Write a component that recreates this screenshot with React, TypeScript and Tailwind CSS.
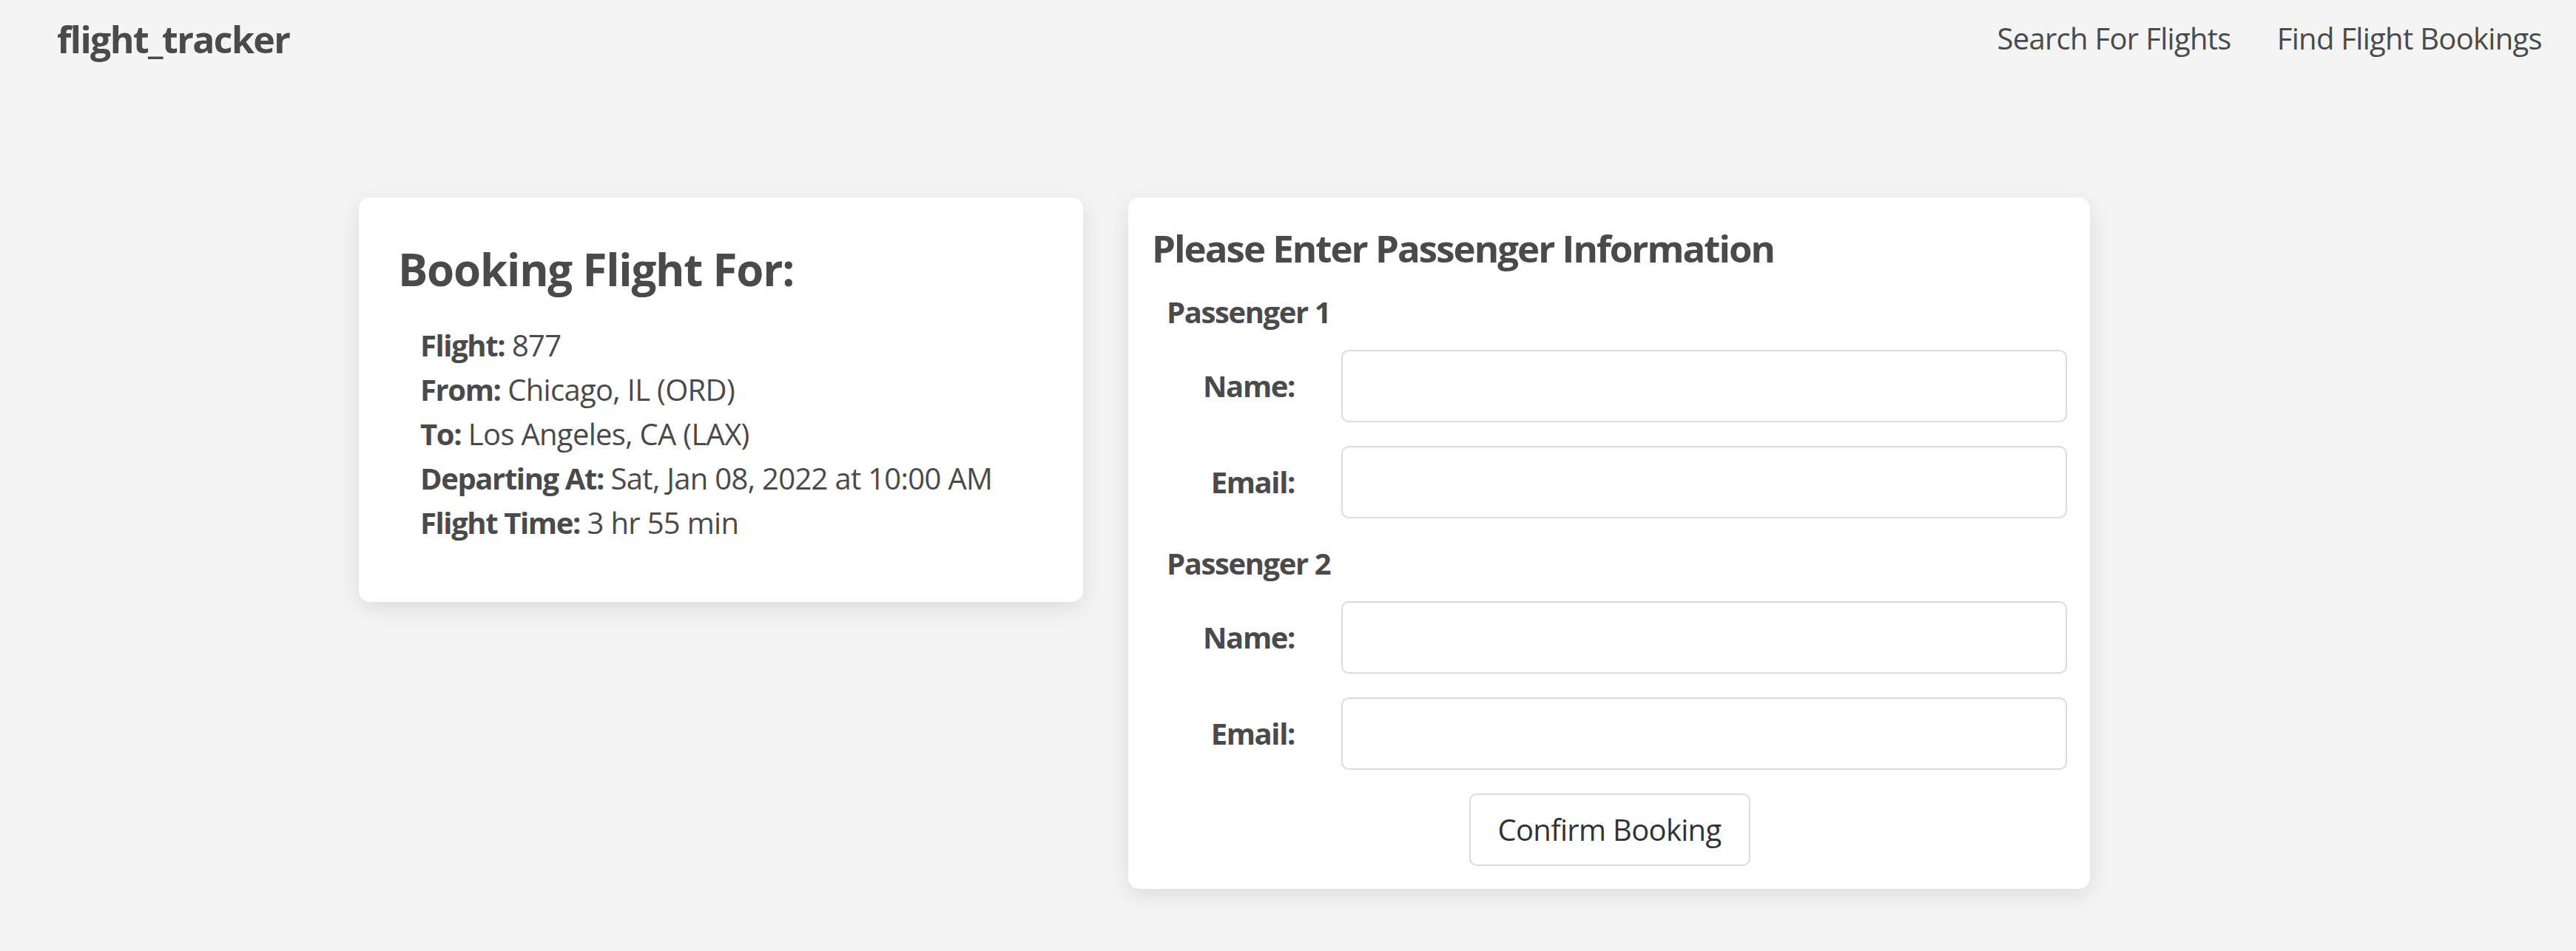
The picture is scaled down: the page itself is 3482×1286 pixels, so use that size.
const FLIGHT = [
  { id: "flight", label: "Flight:", value: "877" },
  { id: "from", label: "From:", value: "Chicago, IL (ORD)" },
  { id: "to", label: "To:", value: "Los Angeles, CA (LAX)" },
  { id: "departing", label: "Departing At:", value: "Sat, Jan 08, 2022 at 10:00 AM" },
  { id: "duration", label: "Flight Time:", value: "3 hr 55 min" },
];

const PASSENGERS = [1, 2];

const Field = ({ label }: { label: string }) => (
  <div className="flex items-center">
    <label className="w-[193px] text-right font-bold tracking-[-1.4px] shrink-0">{label}</label>
    <input
      type="text"
      className="ml-[63px] flex-1 h-[98px] rounded-[10px] border-[2.5px] border-[#dcdcdc] bg-white px-5 outline-none shadow-[inset_0_2px_3px_rgba(0,0,0,0.03)]"
    />
  </div>
);

const App = () => {
  return (
    <div className="min-h-screen bg-[#f4f4f4] text-[#4a4a4a] font-['Segoe_UI','Open_Sans',sans-serif] text-[40px] leading-[1.5] tracking-[-0.7px]">
      <nav className="flex items-start justify-between pl-[77px] pr-[46px]">
        <a className="pt-[16px] text-[50px] font-bold tracking-[-1.6px]">flight_tracker</a>
        <div className="flex gap-[62px] pt-[22px]">
          <a>Search For Flights</a>
          <a>Find Flight Bookings</a>
        </div>
      </nav>

      <main className="flex items-start gap-[61px] pl-[485px] pt-[176px] pb-[80px]">
        <div className="w-[979px] rounded-[15px] bg-white pt-[61px] px-[53px] pb-[77px] shadow-[0_8px_30px_rgba(0,0,0,0.1)]">
          <h2 className="text-[60px] font-bold leading-[1.2] tracking-[-1.2px]">Booking Flight For:</h2>
          <ul className="mt-[37px] pl-[30px]">
            {FLIGHT.map((row) => (
              <li key={row.id}>
                <span className="font-bold tracking-[-1.4px]">{row.label}</span> {row.value}
              </li>
            ))}
          </ul>
        </div>

        <div className="w-[1300px] rounded-[15px] bg-white pt-[36px] pl-[32px] pr-[31px] pb-[31px] shadow-[0_8px_30px_rgba(0,0,0,0.1)]">
          <h3 className="text-[51px] font-bold leading-[1.27] tracking-[-2px]">Please Enter Passenger Information</h3>
          <form className="mt-[24px] flex flex-col">
            {PASSENGERS.map((n) => (
              <div key={n} className={n > 1 ? "mt-[31px]" : ""}>
                <h4 className="ml-[20px] font-bold tracking-[-1.4px] mb-[21px]">Passenger {n}</h4>
                <div className="flex flex-col gap-[32px]">
                  <Field label="Name:" />
                  <Field label="Email:" />
                </div>
              </div>
            ))}
            <div className="mt-[32px] flex justify-center">
              <button
                type="button"
                className="h-[98px] w-[380px] rounded-[10px] border-[2.5px] border-[#dcdcdc] bg-white text-[#333]"
              >
                Confirm Booking
              </button>
            </div>
          </form>
        </div>
      </main>
    </div>
  );
};

export default App;
